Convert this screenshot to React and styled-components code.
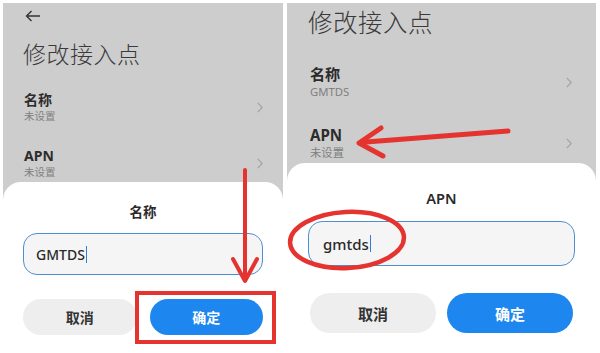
import styled, { createGlobalStyle } from 'styled-components';

const GlobalStyle = createGlobalStyle`
	html, body {
		margin: 0;
		background: #ffffff;
	}
	body {
		font-family: "Noto Sans", "Noto Sans CJK SC", sans-serif;
	}
`;

const Page = styled.div`
	position: relative;
	display: flex;
	gap: 4px;
	width: 600px;
	height: 353px;
	padding: 3px 0 0 3px;
	box-sizing: border-box;
	overflow: hidden;
`;

const Screen = styled.div`
	width: ${({ $w }) => $w}px;
	height: 350px;
	background: #cdcdcd;
	display: flex;
	flex-direction: column;
	overflow: hidden;
`;

const BackRow = styled.div`
	padding: 7px 0 0 22px;
	height: 12px;
	color: #333;

	svg {
		display: block;
	}
`;

const Title = styled.h1`
	margin: ${({ $top }) => $top}px 0 0 ${({ $left }) => $left}px;
	font-size: ${({ $size }) => $size}px;
	line-height: ${({ $size }) => $size}px;
	font-weight: 300;
	color: #3a3a3a;
	letter-spacing: 0.5px;
`;

const Rows = styled.div`
	display: flex;
	flex-direction: column;
	gap: ${({ $gap }) => $gap}px;
	margin-top: ${({ $top }) => $top}px;
	padding: 0 ${({ $right }) => $right}px 0 ${({ $left }) => $left}px;
`;

const Row = styled.div`
	display: flex;
	align-items: center;
	justify-content: space-between;
`;

const Label = styled.div`
	font-size: ${({ $k }) => 14 * $k}px;
	line-height: ${({ $k }) => 16 * $k}px;
	font-weight: 700;
	color: #2c2c2c;
`;

const Sub = styled.div`
	margin-top: 2px;
	font-size: ${({ $k }) => 10.5 * $k}px;
	line-height: ${({ $k }) => 13 * $k}px;
	color: #808080;
`;

const Chevron = styled.svg`
	width: 6px;
	height: 11px;
	stroke: #a4a4a4;
	fill: none;
	stroke-width: 1.2;
`;

const Sheet = styled.div`
	flex: 1;
	margin-top: ${({ $top }) => $top}px;
	background: #ffffff;
	border-radius: 18px 18px 0 0;
	padding: ${({ $pt }) => $pt}px ${({ $px }) => $px}px 0;
	display: flex;
	flex-direction: column;
`;

const SheetTitle = styled.div`
	text-align: center;
	font-size: ${({ $k }) => 13.5 * $k}px;
	line-height: 20px;
	font-weight: 600;
	color: #2a2a2a;
`;

const Field = styled.div`
	margin-top: ${({ $top }) => $top}px;
	height: ${({ $h }) => $h}px;
	box-sizing: border-box;
	border: 1.5px solid #4f8fcf;
	border-radius: 14px;
	background: #f5f5f5;
	display: flex;
	align-items: center;
	padding-left: ${({ $pl }) => $pl}px;
	font-size: ${({ $size }) => $size}px;
	font-weight: 500;
	color: #2a2a2a;
`;

const Caret = styled.span`
	display: inline-block;
	width: 1.5px;
	height: 17px;
	margin-left: 1px;
	background: #2f7fd8;
`;

const Buttons = styled.div`
	display: flex;
	gap: ${({ $gap }) => $gap}px;
	margin-top: ${({ $top }) => $top}px;
	padding: 0 ${({ $inset }) => $inset}px;
`;

const Button = styled.div`
	flex: 1;
	height: ${({ $h }) => $h}px;
	border-radius: ${({ $h }) => $h / 2}px;
	display: flex;
	align-items: center;
	justify-content: center;
	font-size: ${({ $size }) => $size}px;
	font-weight: 700;
	background: ${({ $primary }) => ($primary ? '#1d86ef' : '#eeeeee')};
	color: ${({ $primary }) => ($primary ? '#ffffff' : '#333333')};
`;

const Marks = styled.svg`
	position: absolute;
	inset: 0;
	pointer-events: none;
`;

const ChevronIcon = () => (
	<Chevron viewBox="0 0 6 11">
		<path d="M0.8 0.8 L5.2 5.5 L0.8 10.2" />
	</Chevron>
);

const SettingRow = ({ k, label, value }) => (
	<Row>
		<div>
			<Label $k={k}>{label}</Label>
			<Sub $k={k}>{value}</Sub>
		</div>
		<ChevronIcon />
	</Row>
);

const App = () => {
	return (
		<>
			<GlobalStyle />
			<Page>
				<Screen $w={280}>
					<BackRow>
						<svg width="16" height="12" viewBox="0 0 16 12" fill="none" stroke="#333" strokeWidth="1.4">
							<path d="M15 6 H1.5 M6.5 1 L1.5 6 L6.5 11" />
						</svg>
					</BackRow>
					<Title $top={21} $left={20} $size={23}>修改接入点</Title>
					<Rows $top={26} $gap={25} $left={21} $right={20}>
						<SettingRow k={1} label="名称" value="未设置" />
						<SettingRow k={1} label="APN" value="未设置" />
					</Rows>
					<Sheet $top={3} $pt={20} $px={20}>
						<SheetTitle $k={1}>名称</SheetTitle>
						<Field $top={11} $h={42} $pl={12} $size={14}>
							GMTDS<Caret />
						</Field>
						<Buttons $top={24} $gap={13} $inset={0}>
							<Button $h={36} $size={14}>取消</Button>
							<Button $h={36} $size={14} $primary>确定</Button>
						</Buttons>
					</Sheet>
				</Screen>

				<Screen $w={309}>
					<Title $top={8} $left={21} $size={24.5}>修改接入点</Title>
					<Rows $top={30} $gap={28} $left={23} $right={24}>
						<SettingRow k={1.08} label="名称" value="GMTDS" />
						<SettingRow k={1.08} label="APN" value="未设置" />
					</Rows>
					<Sheet $top={3} $pt={25} $px={21}>
						<SheetTitle $k={1.08}>APN</SheetTitle>
						<Field $top={13} $h={45} $pl={14} $size={15}>
							gmtds<Caret />
						</Field>
						<Buttons $top={27} $gap={11} $inset={2}>
							<Button $h={40} $size={15}>取消</Button>
							<Button $h={40} $size={15} $primary>确定</Button>
						</Buttons>
					</Sheet>
				</Screen>

				<Marks viewBox="0 0 600 353" width="600" height="353">
					<g stroke="#e53430" fill="none" strokeLinecap="round" strokeLinejoin="round">
						<path d="M245 170 V279" strokeWidth="4" />
						<path d="M233 259 L245 281 L257 259" strokeWidth="4" />
						<rect x="137" y="293" width="137" height="49" strokeWidth="4" strokeLinecap="butt" strokeLinejoin="miter" />
						<path d="M508 131 L366 142" strokeWidth="5" />
						<path d="M381 128 L359 143 L383 156" strokeWidth="5" />
						<ellipse cx="347" cy="240" rx="57" ry="28" transform="rotate(-3 347 240)" strokeWidth="4.5" />
					</g>
				</Marks>
			</Page>
		</>
	);
};

export default App;
